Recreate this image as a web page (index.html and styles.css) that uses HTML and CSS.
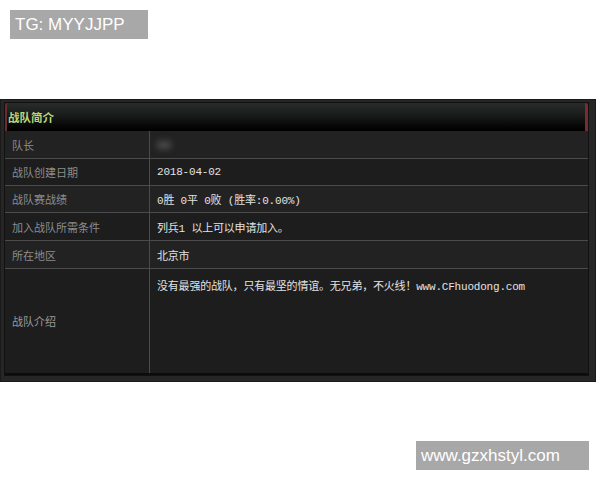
FILE: index.html
```html
<!DOCTYPE html>
<html>
<head>
<meta charset="utf-8">
<link rel="stylesheet" href="styles.css">
</head>
<body>
<div class="page">
  <div class="tag-top">TG: MYYJJPP</div>
  <div class="panel">
    <div class="panel-inner">
      <div class="head"><span class="head-title">战队简介</span></div>
      <div class="table">
        <div class="row row-a"><div class="label">队长</div><div class="value"><span class="blur"></span></div></div>
        <div class="row"><div class="label">战队创建日期</div><div class="value">2018-04-02</div></div>
        <div class="row"><div class="label">战队赛战绩</div><div class="value">0胜 0平 0败 (胜率:0.00%)</div></div>
        <div class="row row-a"><div class="label">加入战队所需条件</div><div class="value">列兵1 以上可以申请加入。</div></div>
        <div class="row row-a"><div class="label">所在地区</div><div class="value">北京市</div></div>
        <div class="row row-tall"><div class="label label-mid">战队介绍</div><div class="value value-top">没有最强的战队，只有最坚的情谊。无兄弟，不火线！www.CFhuodong.com</div></div>
      </div>
    </div>
  </div>
  <div class="bottom"><div class="tag-bottom">www.gzxhstyl.com</div></div>
</div>
</body>
</html>
```
FILE: styles.css
```css
html, body {
  margin: 0;
  padding: 0;
  background: #ffffff;
}
.page {
  width: 600px;
  height: 480px;
  font-family: "Liberation Sans", Arial, sans-serif;
  display: flex;
  flex-direction: column;
}
.tag-top {
  margin: 10px 0 0 10px;
  width: 133px;
  height: 29px;
  padding-left: 5px;
  background: #a8a8a8;
  color: #ffffff;
  font-size: 17px;
  line-height: 29px;
}
.panel {
  margin-top: 60px;
  width: 596px;
  height: 283px;
  background: #262627;
  box-sizing: border-box;
  padding: 3px 7px 6px 4px;
  box-shadow: inset 0 0 0 1px #1a1a1a;
}
.panel-inner {
  height: 100%;
  display: flex;
  flex-direction: column;
  border: 1px solid #111;
  box-sizing: border-box;
}
.head {
  height: 28px;
  flex: none;
  background: linear-gradient(#2a2c2b 0%, #1b1c1c 40%, #080808 80%, #000 100%);
  display: flex;
  align-items: center;
  border-left: 2px solid #6a2a2e;
  border-right: 3px solid #7a2a30;
  border-radius: 3px 3px 0 0;
}
.head-title {
  font-family: "Noto Sans CJK SC", sans-serif;
  font-weight: bold;
  color: #b9d67c;
  font-size: 11.5px;
  padding-left: 1px;
}
.table {
  flex: 1;
  display: flex;
  flex-direction: column;
}
.row {
  display: flex;
  flex: none;
  height: 27px;
  box-sizing: border-box;
  border-bottom: 1px solid #4b4b4c;
  background: #222223;
}
.row-a {
  height: 28px;
}
.row:nth-child(2n) {
  background: #1d1d1e;
}
.row-tall {
  flex: 1;
  border-bottom: 2px solid #0c0c0c;
  background: #1b1b1c;
}
.label {
  width: 145px;
  box-sizing: border-box;
  border-right: 1px solid #4b4b4c;
  color: #8c8c8c;
  font-family: "Noto Sans CJK SC", sans-serif;
  font-size: 11px;
  padding-left: 7px;
  display: flex;
  align-items: center;
}
.label-mid {
  color: #9a9a9a;
}
.value {
  flex: 1;
  color: #e2e2e2;
  font-family: "Liberation Mono", "Noto Sans CJK SC", monospace;
  font-size: 11px;
  padding-left: 7px;
  display: flex;
  align-items: center;
  letter-spacing: -0.2px;
}
.value-top {
  align-items: flex-start;
  padding-top: 8px;
}
.blur {
  width: 14px;
  height: 8px;
  background: #4a4a4a;
  filter: blur(3px);
}
.bottom {
  margin-top: 59px;
  display: flex;
  justify-content: flex-end;
  padding-right: 11px;
}
.tag-bottom {
  width: 168px;
  height: 29px;
  padding-left: 5px;
  background: #a8a8a8;
  color: #ffffff;
  font-size: 17px;
  line-height: 29px;
}
```
